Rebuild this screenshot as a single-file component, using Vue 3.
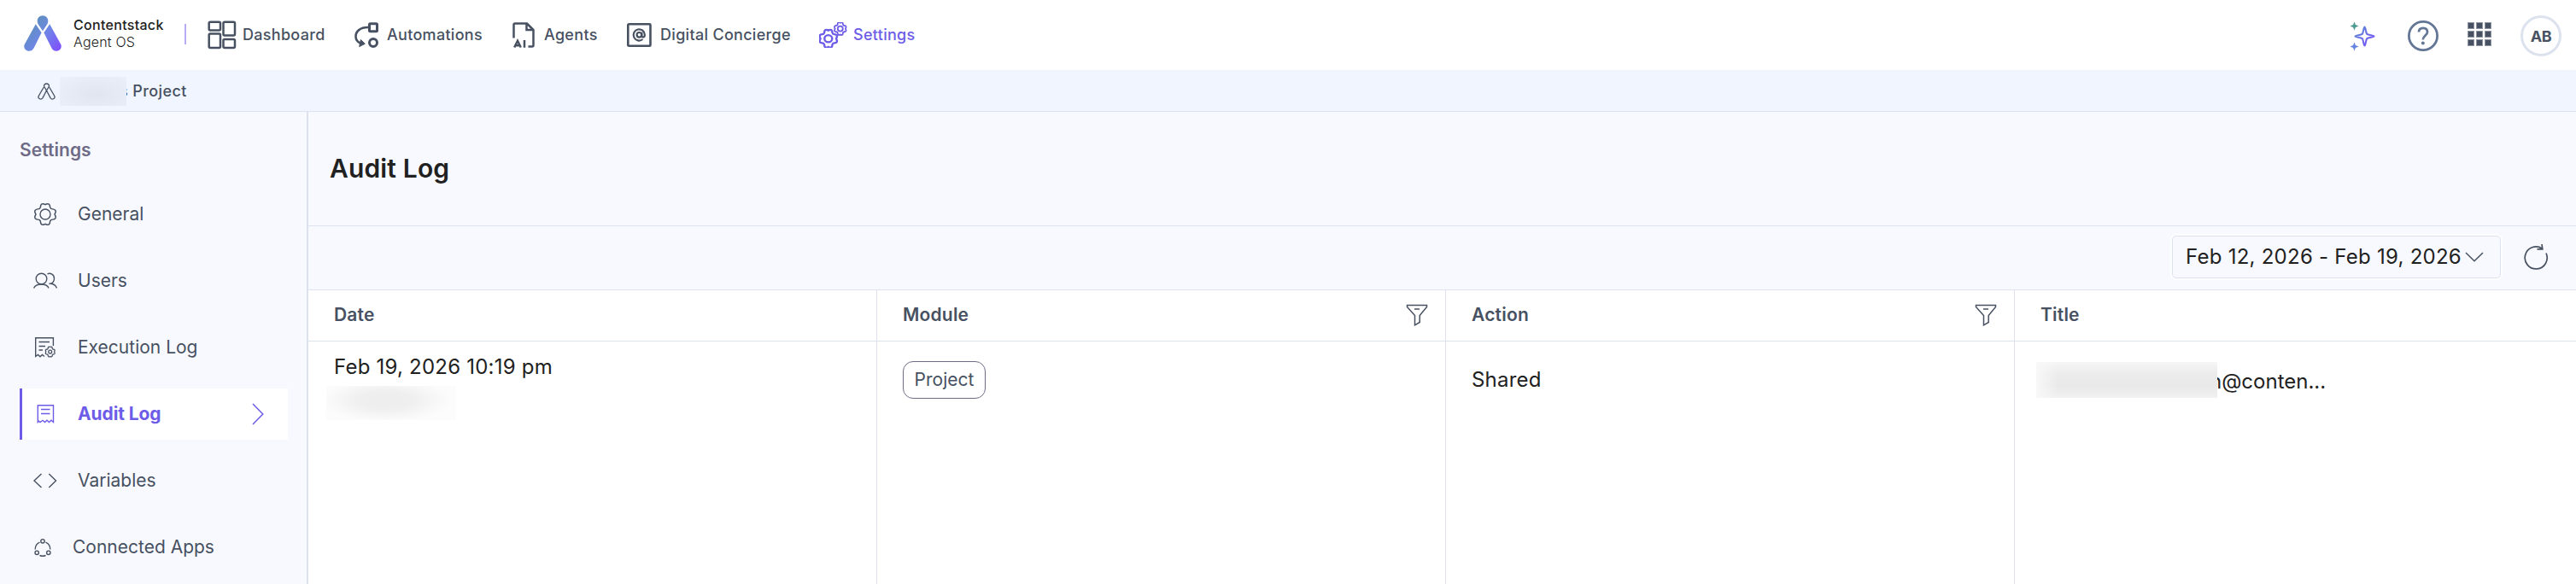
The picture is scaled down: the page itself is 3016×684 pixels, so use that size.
<script setup>
const nav = [
  { id: 'dash', label: 'Dashboard' },
  { id: 'auto', label: 'Automations' },
  { id: 'agents', label: 'Agents' },
  { id: 'concierge', label: 'Digital Concierge' },
  { id: 'settings', label: 'Settings' },
]
const side = [
  { id: 'general', label: 'General' },
  { id: 'users', label: 'Users' },
  { id: 'exec', label: 'Execution Log' },
  { id: 'audit', label: 'Audit Log' },
  { id: 'vars', label: 'Variables' },
  { id: 'apps', label: 'Connected Apps' },
]
const columns = [
  { id: 'date', label: 'Date' },
  { id: 'module', label: 'Module', filter: true },
  { id: 'action', label: 'Action', filter: true },
  { id: 'title', label: 'Title' },
]
const gear = 'M9.2 3.2C10 1.2 12.2 1.4 14 2.6C15.8 1.4 18 1.2 18.8 3.2C19 4.8 19 6.4 20.2 7.4C22 8.2 24 7.6 25 9.4C26 11.4 24.6 12.6 24.2 14C24.6 15.4 26 16.6 25 18.6C24 20.4 22 19.8 20.2 20.6C19 21.6 19 23.2 18.8 24.8C18 26.8 15.8 26.6 14 25.4C12.2 26.6 10 26.8 9.2 24.8C9 23.2 9 21.6 7.8 20.6C6 19.8 4 20.4 3 18.6C2 16.6 3.4 15.4 3.8 14C3.4 12.6 2 11.4 3 9.4C4 7.6 6 8.2 7.8 7.4C9 6.4 9 4.8 9.2 3.2Z'
</script>

<template>
  <div class="page">
    <header class="top">
      <svg class="logo" width="44" height="42" viewBox="0 0 44 42">
        <defs>
          <linearGradient id="brand" gradientUnits="userSpaceOnUse" x1="4" y1="8" x2="42" y2="40">
            <stop offset="0" stop-color="#5b93b4" />
            <stop offset=".5" stop-color="#6f86e6" />
            <stop offset="1" stop-color="#8050ff" />
          </linearGradient>
        </defs>
        <g fill="url(#brand)">
          <path d="M22 .3c-3.6 0-6.3 2.8-6.3 6.2 0 2.4 1 4 2.4 6L22 18.200l3.900-5.700c1.400-2 2.400-3.600 2.400-6C28.300 3.100 25.600.3 22 .3Z" />
          <path d="M13.800 10.200 20.600 20.200 11.600 38.200C10.400 40.600 8.400 41.700 6 41.700 2 41.700-.8 38 .6 34.200Z" />
          <path d="M30.200 10.200 23.400 20.200 32.400 38.200c1.200 2.400 3.200 3.500 5.600 3.500 4 0 6.800-3.700 5.400-7.500Z" />
        </g>
      </svg>
      <div class="brand"><b>Contentstack</b><span>Agent OS</span></div>
      <i class="bar"></i>
      <nav class="nav">
        <a v-for="n in nav" :key="n.id" :class="['nav-item', n.id]">
          <svg v-if="n.id === 'dash'" width="34" height="34" viewBox="0 0 34 34" fill="none" stroke="currentColor" stroke-width="2.500">
            <rect x="1.700" y="1.700" width="13.300" height="9.800" rx="1.500" /><rect x="18.500" y="1.700" width="13.500" height="15.800" rx="1.500" />
            <rect x="1.700" y="15.500" width="13.300" height="16.500" rx="1.500" /><rect x="18.500" y="22" width="13.500" height="10" rx="1.500" />
          </svg>
          <svg v-else-if="n.id === 'auto'" width="28" height="30" viewBox="0 0 28 30" fill="none" stroke="currentColor" stroke-width="3">
            <rect x="17.500" y="1.700" width="9" height="9" rx="1" /><circle cx="22" cy="24" r="4.500" />
            <path d="M16 6C6.500 5.800 1.500 11 1.500 16.500 1.500 21 4 23.500 7.500 25" stroke-width="2.600" />
            <path d="M7.400 20.500 12.300 25.300 5.700 28.600Z" fill="currentColor" stroke-width="1" />
          </svg>
          <svg v-else-if="n.id === 'agents'" width="26" height="30" viewBox="0 0 26 30" fill="none" stroke="currentColor" stroke-width="2.500">
            <path d="M1.500 18.500V3Q1.500 1.500 3 1.500H17L24.500 9V27Q24.500 28.500 23 28.500H18.500M16.500 2V9H24" />
            <path d="M2.200 29.500 6 21.800 9.800 29.500M3.600 27.300H8.400M14 21V29.700" />
          </svg>
          <svg v-else-if="n.id === 'concierge'" width="29" height="28" viewBox="0 0 29 28" fill="none" stroke="currentColor">
            <rect x="1.300" y="1.300" width="26.200" height="25.400" rx="1" stroke-width="2.600" />
            <path d="M18.500 19A6.600 6.600 0 1 1 20.900 13.800C20.900 17.200 17.400 17.400 17.400 14.600V10.800" stroke-width="2.200" />
            <circle cx="14.400" cy="13.800" r="2.800" stroke-width="2.200" />
          </svg>
          <svg v-else width="33" height="30" viewBox="0 0 33 30" fill="none" stroke="currentColor">
            <g transform="translate(-1.800 7.500) scale(.9 .84)"><path :d="gear" stroke-width="2.700" /><circle cx="14" cy="14" r="5" stroke-width="2.700" /></g>
            <g transform="translate(16.400 -.8) scale(.6)"><path :d="gear" stroke-width="3" /><circle cx="14" cy="14" r="5" stroke-width="3" /></g>
          </svg>
          <span>{{ n.label }}</span>
        </a>
      </nav>
      <div class="tools">
        <svg class="spark" width="30" height="36" viewBox="0 0 30 36">
          <defs><linearGradient id="sp" x1="0" y1="0" x2="1" y2="1"><stop offset="0" stop-color="#5b8fd0" /><stop offset="1" stop-color="#7c4dff" /></linearGradient></defs>
          <path d="M17.500 7.500C18.600 7.500 18.900 14 20.200 15.800 22 17.100 28.500 17.400 28.500 18.500S22 19.900 20.200 21.200C18.900 23 18.600 29.500 17.500 29.500S16.100 23 14.800 21.200C13 19.900 6.500 19.600 6.500 18.500S13 17.100 14.800 15.800C16.100 14 16.400 7.500 17.500 7.500Z" fill="none" stroke="url(#sp)" stroke-width="2.100" />
          <path d="M5.500 1.500 6.900 5.100 10.500 6.500 6.900 7.900 5.500 11.500 4.100 7.900 .5 6.500 4.100 5.100Z" fill="#4c9a92" />
          <path d="M5.500 25.500 6.900 29.100 10.500 30.500 6.900 31.900 5.500 35.500 4.100 31.900 .5 30.500 4.100 29.100Z" fill="#6484e0" />
        </svg>
        <svg class="help" width="36" height="36" viewBox="0 0 36 36" fill="none" stroke="#647696">
          <circle cx="18" cy="18" r="16.600" stroke-width="2.800" />
          <path d="M13 13.500C13 10.500 15 8.800 18 8.800S23 10.500 23 13.400C23 17.500 17.800 17.500 17.800 22.500" stroke-width="2.800" /><circle cx="17.800" cy="26.600" r="2" fill="#647696" stroke="none" />
        </svg>
        <div class="dots"><i v-for="k in 9" :key="k"></i></div>
        <div class="avatar">AB</div>
      </div>
    </header>

    <div class="crumb">
      <svg width="21" height="20" viewBox="0 0 21 20" fill="none" stroke="#475161" stroke-width="1.300">
        <path d="M10.500 1C8.500 1 7.200 2.500 7.600 4.300L10.500 9 13.400 4.300C13.800 2.500 12.500 1 10.500 1Z" />
        <path d="M7.300 5 1.200 15.500C0 18.500 4 20.500 6 17.600L10.500 9M13.700 5 19.800 15.500C21 18.500 17 20.500 15 17.600L10.500 9" />
      </svg>
      <i class="smudge crumb-smudge"></i><span class="crumb-name">s Project</span>
    </div>

    <div class="body">
      <aside class="side">
        <h2>Settings</h2>
        <a v-for="s in side" :key="s.id" :class="['item', s.id]">
          <svg v-if="s.id === 'general'" class="ic" width="28" height="28" viewBox="0 0 28 28"><g transform="translate(14 14) scale(1.080 1) translate(-14 -14)"><path :d="gear" /></g><circle cx="14" cy="14" r="6" /></svg>
          <svg v-else-if="s.id === 'users'" class="ic" width="28" height="28" viewBox="0 0 28 28"><circle cx="9.500" cy="11.500" r="6.300" /><path d="M.6 22.500C3 16.500 16 16.500 18 22.500M16.500 5.800C20 4.200 24.500 6.500 24.500 11.200 24.500 14 23 16 20.500 17.200 24 17.500 26.500 19.500 27.500 22.500M18.500 17.300H21" /></svg>
          <svg v-else-if="s.id === 'exec'" class="ic" width="28" height="28" viewBox="0 0 28 28"><path d="M23.400 12V2.700H2.700V24.500L5.500 22.500 8 24.800 10.500 22.500 13 24.500M6.500 7.500H19M6.500 12.500H14M6.500 17H11" /><g transform="translate(13 12.300) scale(.48)" stroke-width="2.700"><path :d="gear" /><circle cx="14" cy="14" r="4" /></g></svg>
          <svg v-else-if="s.id === 'audit'" class="ic" width="28" height="28" viewBox="0 0 28 28"><path d="M4.300 23.500V3.800H22.500V23.500L20 21.300 17.500 23.500 15 21.300 12.500 23.500 10 21.300 7 23.500 5.500 22.300ZM8 8.500H18.500M8 13.500H18.500" /></svg>
          <svg v-else-if="s.id === 'vars'" class="ic" width="28" height="28" viewBox="0 0 28 28"><path d="M9.500 6 1 14 9.500 22M18.300 6 26.500 14 18.300 22" /></svg>
          <svg v-else class="ic" width="22" height="28" viewBox="0 0 22 28"><circle cx="11" cy="6.800" r="2.200" /><circle cx="4.200" cy="20.300" r="2.200" /><circle cx="17.800" cy="20.300" r="2.200" /><path d="M7.500 8.200C4 9.700 2.200 12.500 2.200 16.500M14.500 8.200C18 9.700 19.800 12.500 19.800 16.500M7.500 23.500C9.500 24.400 12.500 24.400 14.500 23.500" /></svg>
          <span>{{ s.label }}</span>
          <svg v-if="s.id === 'audit'" class="chev" width="14" height="26" viewBox="0 0 14 26" fill="none" stroke="currentColor" stroke-width="1.500"><path d="M1 1 12.800 13 1 25" /></svg>
        </a>
      </aside>

      <main class="main">
        <div class="title"><h1>Audit Log</h1></div>
        <div class="filters">
          <div class="range"><span>Feb 12, 2026 - Feb 19, 2026</span>
            <svg width="22" height="12" viewBox="0 0 22 12" fill="none" stroke="#475161" stroke-width="1.500"><path d="M1 1 11 10.800 21 1" /></svg>
          </div>
          <svg class="refresh" width="30" height="32" viewBox="0 0 30 32" fill="none" stroke="#475161" stroke-width="1.700"><path d="M27 11.500A13 13 0 1 1 22.500 6.200M16.500 6.800H22.800L22 1" /></svg>
        </div>
        <div class="table">
          <div v-for="c in columns" :key="c.id" :class="['col', 'col-' + c.id]">
            <div class="th"><span>{{ c.label }}</span>
              <svg v-if="c.filter" width="26" height="26" viewBox="0 0 26 26" fill="none" stroke="#475161" stroke-width="1.500"><path d="M1.500 1.500H24.500V3.500L16.200 13.500V21.500L10.500 24.800V13.500L1.500 3.500ZM10 6H16" /></svg>
            </div>
            <div class="td">
              <template v-if="c.id === 'date'"><span class="when">Feb 19, 2026 10:19 pm</span><i class="smudge date-smudge"></i></template>
              <span v-else-if="c.id === 'module'" class="pill">Project</span>
              <span v-else-if="c.id === 'action'" class="shared">Shared</span>
              <template v-else><i class="smudge title-smudge"></i><span class="mail">n@conten...</span></template>
            </div>
          </div>
        </div>
      </main>
    </div>
  </div>
</template>

<style>
body { margin: 0; overflow: hidden; }
</style>
<style scoped>
* { box-sizing: border-box; }
.page { width: 3016px; height: 684px; overflow: hidden; background: #fff; color: #475161; font-family: Inter, "Liberation Sans", sans-serif; display: flex; flex-direction: column; }
svg { flex: none; display: block; }
i { display: block; }
.top { height: 82px; flex: none; display: flex; align-items: flex-start; padding-left: 28px; }
.logo { margin-top: 18px; }
.brand { margin: 19px 0 0 14px; width: 130px; display: flex; flex-direction: column; font-size: 16px; line-height: 20px; color: #212121; white-space: nowrap; }
.brand b { font-weight: 550; letter-spacing: .3px; }
.brand span { font-weight: 350; letter-spacing: .2px; }
.bar { width: 2px; height: 24px; margin-top: 28px; background: #b8acf4; }
.nav { display: flex; height: 82px; align-items: center; margin-left: 25px; }
.nav-item { display: flex; align-items: center; height: 82px; font-size: 18px; font-weight: 550; white-space: nowrap; letter-spacing: .3px; }
.nav-item span { line-height: 24px; }
.dash { width: 172px; gap: 7px; }
.auto { width: 185px; gap: 10px; }
.agents { width: 134px; gap: 11px; }
.concierge { width: 224px; gap: 10px; }
.nav .settings { gap: 7px; color: #6c5ce7; padding-left: 1px; }
.tools { margin-left: auto; display: flex; align-items: center; height: 84px; padding-right: 17px; }
.spark { margin-right: 38px; }
.help { margin-right: 34px; }
.dots { display: grid; grid-template-columns: repeat(3, 8px); gap: 2px; margin: -4px 34px 0 0; }
.dots i { width: 8px; height: 8px; background: #475161; border: 1px solid #8d94a3; }
.avatar { width: 48px; height: 48px; border: 3px solid #dde3ee; border-radius: 50%; display: grid; place-items: center; font-size: 18px; font-weight: 700; letter-spacing: -.5px; }
.crumb { height: 49px; flex: none; background: #f0f5ff; border-bottom: 1px solid #dde3ee; display: flex; align-items: center; padding: 1px 0 0 44px; font-size: 18px; font-weight: 500; line-height: 24px; }
.smudge { flex: none; position: relative; z-index: 1; }
.crumb-smudge { width: 78px; height: 34px; margin-left: 5px; background: radial-gradient(ellipse at 55% 60%, #e0e5ef 0, #e5eaf4 45%, #ebf0fa 100%); }
.crumb-name { margin-left: -8px; letter-spacing: .4px; }
.body { flex: 1; display: flex; min-height: 0; }
.side { width: 361px; flex: none; background: #f8f9fe; border-right: 2px solid #dde3ee; padding: 32px 22px 0 23px; }
.side h2 { margin: 0 0 32px; height: 26px; font-size: 21px; line-height: 26px; font-weight: 600; letter-spacing: .05px; color: #6e6b86; }
.item { display: flex; align-items: center; height: 60px; margin-bottom: 18px; padding-left: 16px; font-size: 21px; font-weight: 430; white-space: nowrap; }
.item span { margin-top: -1px; }
.ic { margin-right: 24px; fill: none; stroke: currentColor; stroke-width: 1.400; }
.item.audit { background: #fff; border-left: 3px solid #6c5ce7; padding-left: 14px; color: #6c5ce7; font-weight: 650; letter-spacing: -.1px; }
.audit .ic { margin-right: 23px; }
.chev { margin-left: auto; margin-right: 28px; }
.main { flex: 1; min-width: 0; display: flex; flex-direction: column; background: #f8f9fe; }
.title { height: 134px; flex: none; border-bottom: 1px solid #dde3ee; padding: 47px 0 0 25px; }
h1 { margin: 0; font-size: 30px; line-height: 38px; font-weight: 630; letter-spacing: .15px; color: #212121; }
.filters { height: 75px; flex: none; border-bottom: 1px solid #dde3ee; display: flex; justify-content: flex-end; padding: 11px 32px 0 0; }
.range { width: 385px; height: 50px; border: 1px solid #dde3ee; border-radius: 5px; box-shadow: 0 0 0 2px #fcfdff; display: flex; align-items: center; padding-left: 15px; color: #212121; font-size: 24px; letter-spacing: .25px; white-space: nowrap; }
.range span { width: 327px; line-height: 30px; }
.refresh { margin: 9px 0 0 26px; }
.table { flex: 1; display: grid; grid-template-columns: 666px 666px 666px 1fr; background: #fff; }
.col { border-right: 1px solid #dfe1ee; min-width: 0; }
.col-title { border: 0; }
.th { height: 60px; border-bottom: 1px solid #dde3ee; display: flex; align-items: center; justify-content: space-between; padding: 0 20px 0 30px; font-size: 21px; font-weight: 620; letter-spacing: .2px; }
.th span { margin-top: -3px; }
.th svg { margin-top: -2px; }
.td { height: 284px; padding-left: 30px; color: #212121; font-size: 24px; line-height: 30px; white-space: nowrap; }
.col-date .td { padding-top: 15px; display: flex; flex-direction: column; }
.when { letter-spacing: .22px; }
.date-smudge { width: 152px; height: 40px; margin: 7px 0 0 -9px; background: radial-gradient(ellipse 76px 26px at 46% 42%, #ededed 0, #efefef 40%, #f8f8f8 80%, #fcfcfc 100%); }
.pill { display: inline-flex; align-items: center; justify-content: center; width: 97px; height: 44px; margin-top: 23px; border: 1px solid #6e6b86; border-radius: 12px; color: #475161; font-size: 21px; }
.shared { display: block; margin-top: 30px; letter-spacing: .2px; }
.col-title .td { padding: 24px 0 0 25px; display: flex; }
.title-smudge { width: 212px; height: 42px; background: linear-gradient(90deg, #f8f8f8, rgba(248, 248, 248, 0) 26px), linear-gradient(#f6f6f6, #ebebeb 35%, #e9e9e9 65%, #f1f1f1); }
.mail { line-height: 45px; margin-left: -9px; }
</style>
